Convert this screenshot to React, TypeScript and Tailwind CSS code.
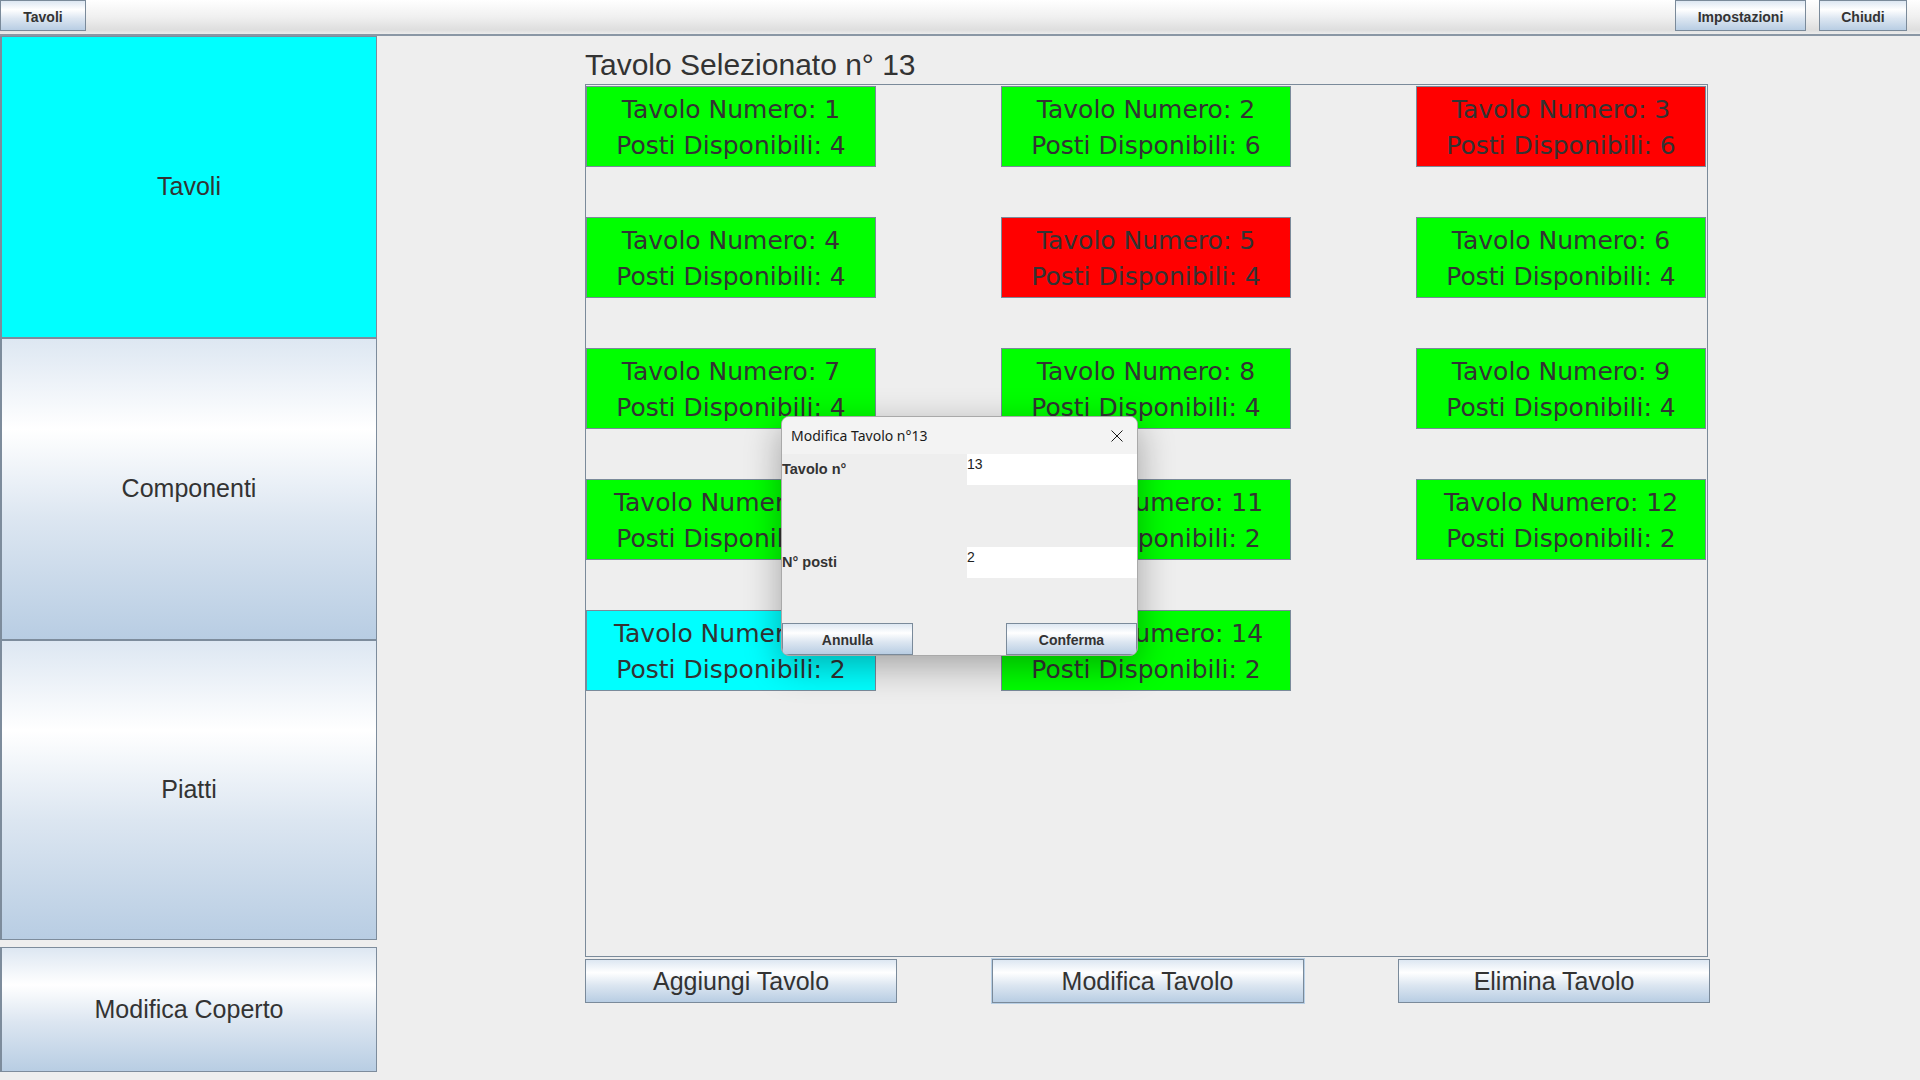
import React from "react";

type Tavolo = { numero: number; posti: number; stato: "libero" | "occupato" | "selezionato" };

const TAVOLI: Tavolo[] = [
  { numero: 1, posti: 4, stato: "libero" },
  { numero: 2, posti: 6, stato: "libero" },
  { numero: 3, posti: 6, stato: "occupato" },
  { numero: 4, posti: 4, stato: "libero" },
  { numero: 5, posti: 4, stato: "occupato" },
  { numero: 6, posti: 4, stato: "libero" },
  { numero: 7, posti: 4, stato: "libero" },
  { numero: 8, posti: 4, stato: "libero" },
  { numero: 9, posti: 4, stato: "libero" },
  { numero: 10, posti: 2, stato: "libero" },
  { numero: 11, posti: 2, stato: "libero" },
  { numero: 12, posti: 2, stato: "libero" },
  { numero: 13, posti: 2, stato: "selezionato" },
  { numero: 14, posti: 2, stato: "libero" },
];

const metal =
  "bg-[linear-gradient(180deg,#dde7f2_0%,#ffffff_30%,#dce6f1_60%,#b8cde3_100%)]";
const arial = "font-['Liberation_Sans',Arial,sans-serif]";

function TopButton({ label, className = "" }: { label: string; className?: string }) {
  return (
    <button
      className={`h-[31px] pt-[3px] border border-[#7a8a9a] ${metal} ${arial} text-[14px] font-bold text-[#333] ${className}`}
    >
      {label}
    </button>
  );
}

function SideButton({ label, active, h }: { label: string; active?: boolean; h: string }) {
  return (
    <button
      className={`${h} w-full flex items-center justify-center border border-l-2 border-[#7d8c9c] ${
        active ? "bg-[#00ffff]" : metal
      } ${arial} text-[25px] text-[#333]`}
    >
      {label}
    </button>
  );
}

function TavoloCard({ t }: { t: Tavolo }) {
  const bg =
    t.stato === "occupato" ? "bg-[#ff0000]" : t.stato === "selezionato" ? "bg-[#00ffff]" : "bg-[#00ff00]";
  return (
    <div
      className={`h-[81px] ${bg} border border-[#7a8a9a] pt-[2px] flex flex-col items-center justify-center font-['DejaVu_Sans',sans-serif] text-[25px] leading-[36px] text-[#333]`}
    >
      <span>Tavolo Numero: {t.numero}</span>
      <span>Posti Disponibili: {t.posti}</span>
    </div>
  );
}

function ModificaDialog() {
  return (
    <div className="absolute left-[781px] top-[416px] w-[357px] h-[240px] rounded-[8px] overflow-hidden border border-[#a9a9a9] shadow-[0_10px_36px_rgba(0,0,0,0.32)] bg-[#eeeeee] flex flex-col">
      <div className="h-[37px] shrink-0 bg-[#f3f3f3] flex items-center justify-between pl-[9px] pr-[14px]">
        <span className="font-['Noto_Sans',sans-serif] text-[14px] text-[#1a1a1a]">Modifica Tavolo n°13</span>
        <svg width="12" height="12" viewBox="0 0 12 12" className="text-[#1a1a1a]">
          <path d="M0.5 0.5 L11.5 11.5 M11.5 0.5 L0.5 11.5" stroke="currentColor" strokeWidth="1" fill="none" />
        </svg>
      </div>
      <div className={`flex-1 flex flex-col ${arial} text-[#333]`}>
        <div className="h-[31px] flex items-center">
          <span className="w-[185px] text-[14.5px] font-bold">Tavolo n°</span>
          <div className="flex-1 h-full bg-white text-[14px] leading-[14px] pt-[3px] text-[#222]">13</div>
        </div>
        <div className="h-[62px]" />
        <div className="h-[31px] flex items-center">
          <span className="w-[185px] text-[14.5px] font-bold">N° posti</span>
          <div className="flex-1 h-full bg-white text-[14px] leading-[14px] pt-[3px] text-[#222]">2</div>
        </div>
        <div className="flex-1" />
        <div className="h-[32px] flex justify-between">
          <button className={`w-[131px] h-full pt-[2px] border border-[#7a8a9a] ${metal} text-[14px] font-bold`}>Annulla</button>
          <button className={`w-[131px] h-full pt-[2px] border border-[#7a8a9a] ${metal} text-[14px] font-bold`}>Conferma</button>
        </div>
      </div>
    </div>
  );
}

export default function App() {
  return (
    <div className="relative w-[1920px] h-[1080px] overflow-hidden bg-[#eeeeee] flex flex-col">
      <div className="h-[36px] shrink-0 border-b-2 border-[#8a97a5] bg-[linear-gradient(180deg,#ffffff_0%,#f0f0f0_50%,#dedede_88%,#ececec_100%)] flex items-start">
        <TopButton label="Tavoli" className="w-[86px]" />
        <div className="flex-1" />
        <TopButton label="Impostazioni" className="w-[131px]" />
        <TopButton label="Chiudi" className="w-[88px] ml-[13px] mr-[13px]" />
      </div>

      <div className="flex-1 flex">
        <div className="w-[377px] shrink-0 flex flex-col">
          <SideButton label="Tavoli" active h="h-[302px]" />
          <SideButton label="Componenti" h="h-[302px]" />
          <SideButton label="Piatti" h="h-[300px]" />
          <div className="h-[7px]" />
          <SideButton label="Modifica Coperto" h="h-[125px]" />
        </div>

        <div className="pl-[208px] flex flex-col">
          <h1 className={`mt-[14px] ${arial} text-[30px] leading-[30px] text-[#333]`}>Tavolo Selezionato n° 13</h1>
          <div className="mt-[4px] w-[1123px] h-[873px] border border-[#7a8a9a] pt-[1px]">
            <div className="grid grid-cols-[290px_290px_290px] gap-x-[125px] gap-y-[50px]">
              {TAVOLI.map((t) => (
                <TavoloCard key={t.numero} t={t} />
              ))}
            </div>
          </div>
          <div className="mt-[2px] w-[1125px] flex justify-between">
            {["Aggiungi Tavolo", "Modifica Tavolo", "Elimina Tavolo"].map((l) => (
              <button
                key={l}
                className={`w-[312px] h-[44px] pt-[2px] border border-[#7a8a9a] ${
                  l === "Modifica Tavolo" ? "outline outline-1 outline-[#b8cfe5]" : ""
                } ${metal} ${arial} text-[25px] text-[#333]`}
              >
                {l}
              </button>
            ))}
          </div>
        </div>
      </div>

      <ModificaDialog />
    </div>
  );
}
